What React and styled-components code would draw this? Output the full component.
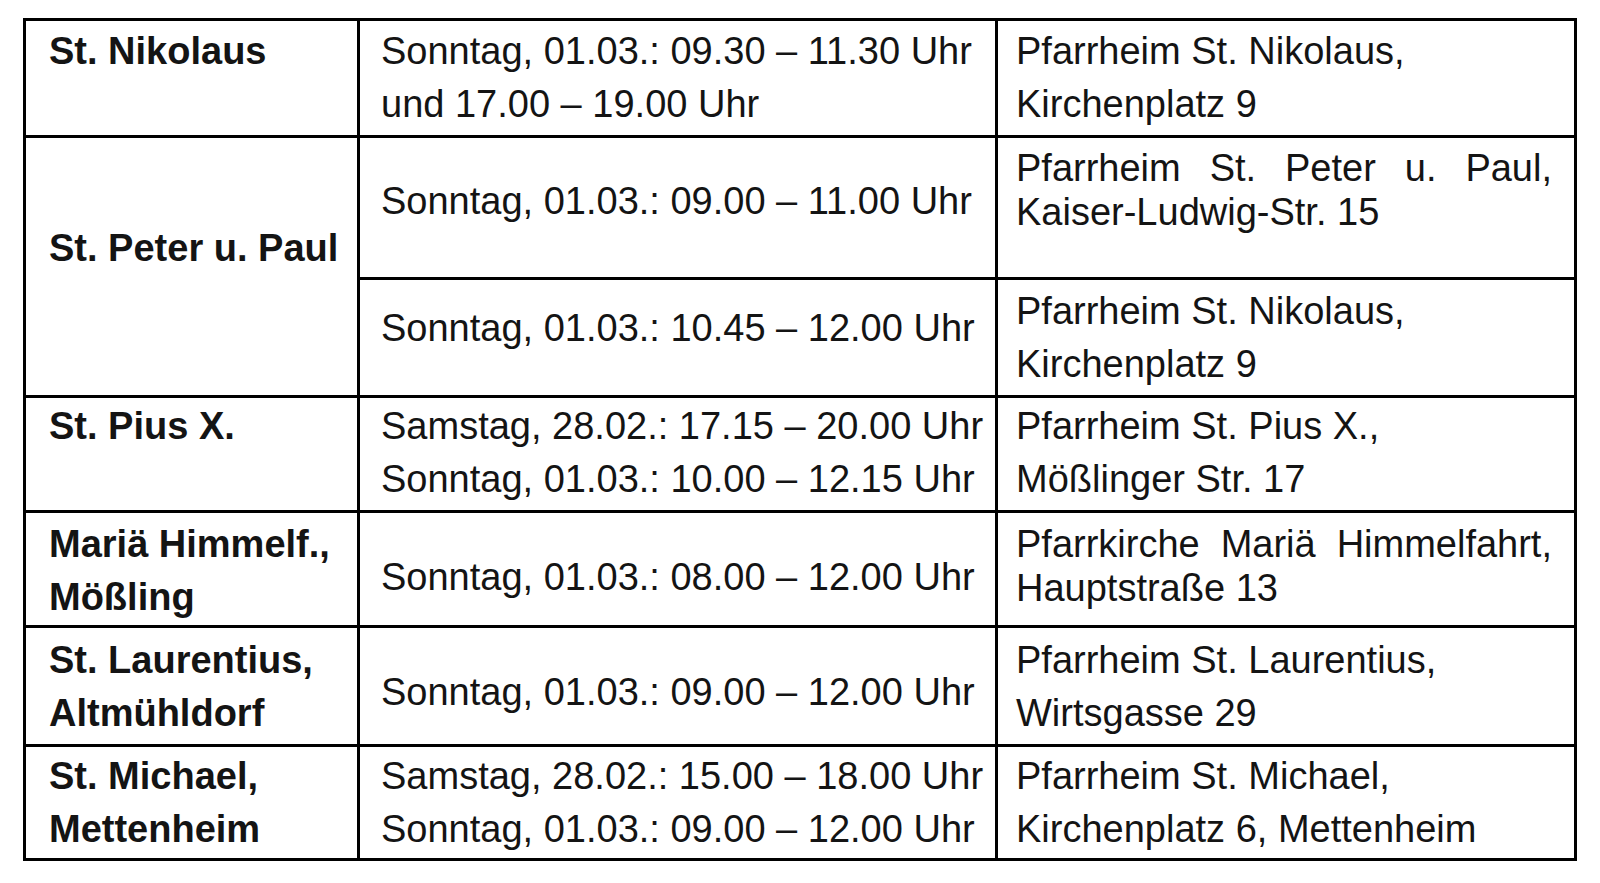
import React from "react";
import styled, { createGlobalStyle } from "styled-components";

const GlobalStyle = createGlobalStyle`
  html, body {
    margin: 0;
    padding: 0;
    background: #ffffff;
  }
  body {
    font-family: "Liberation Sans", Arial, sans-serif;
    color: #141414;
  }
`;

const Page = styled.div`
  padding: 18px 0 0 23px;
`;

const Grid = styled.div`
  display: grid;
  grid-template-columns: 334px 638px 579px;
  grid-template-rows: 117px 142px 118px 115px 115px 119px 114px;
  width: max-content;
  border-top: 3px solid #000;
  border-left: 3px solid #000;
`;

const Cell = styled.div`
  box-sizing: border-box;
  grid-row: ${(p) => (p.$span ? `span ${p.$span}` : "auto")};
  border-right: 3px solid #000;
  border-bottom: 3px solid #000;
  padding: ${(p) => p.$pt}px 22px 0 ${(p) => (p.$col === 3 ? 18 : p.$col === 1 ? 23 : 21)}px;
  font-size: 38px;
  font-weight: ${(p) => (p.$bold ? 700 : 400)};
  line-height: ${(p) => p.$lh || 53}px;
  overflow: hidden;
`;

const Line = styled.div`
  white-space: nowrap;
  text-align: ${(p) => (p.$justify ? "justify" : "left")};
  text-align-last: ${(p) => (p.$justify ? "justify" : "auto")};
`;

const cells = [
  { col: 1, bold: true, pt: 4, lines: ["St. Nikolaus"] },
  { col: 2, pt: 4, lines: ["Sonntag, 01.03.: 09.30 – 11.30 Uhr", "und 17.00 – 19.00 Uhr"] },
  { col: 3, pt: 4, lines: ["Pfarrheim St. Nikolaus,", "Kirchenplatz 9"] },

  { col: 1, bold: true, span: 2, pt: 84, lines: ["St. Peter u. Paul"] },
  { col: 2, pt: 37, lines: ["Sonntag, 01.03.: 09.00 – 11.00 Uhr"] },
  { col: 3, pt: 8, lh: 44, justify: true, lines: ["Pfarrheim St. Peter u. Paul,", "Kaiser-Ludwig-Str. 15"] },
  { col: 2, pt: 22, lines: ["Sonntag, 01.03.: 10.45 – 12.00 Uhr"] },
  { col: 3, pt: 5, lines: ["Pfarrheim St. Nikolaus,", "Kirchenplatz 9"] },

  { col: 1, bold: true, pt: 2, lines: ["St. Pius X."] },
  { col: 2, pt: 2, lines: ["Samstag, 28.02.: 17.15 – 20.00 Uhr", "Sonntag, 01.03.: 10.00 – 12.15 Uhr"] },
  { col: 3, pt: 2, lines: ["Pfarrheim St. Pius X.,", "Mößlinger Str. 17"] },

  { col: 1, bold: true, pt: 5, lines: ["Mariä Himmelf.,", "Mößling"] },
  { col: 2, pt: 38, lines: ["Sonntag, 01.03.: 08.00 – 12.00 Uhr"] },
  { col: 3, pt: 9, lh: 44, justify: true, lines: ["Pfarrkirche Mariä Himmelfahrt,", "Hauptstraße 13"] },

  { col: 1, bold: true, pt: 6, lines: ["St. Laurentius,", "Altmühldorf"] },
  { col: 2, pt: 38, lines: ["Sonntag, 01.03.: 09.00 – 12.00 Uhr"] },
  { col: 3, pt: 6, lines: ["Pfarrheim St. Laurentius,", "Wirtsgasse 29"] },

  { col: 1, bold: true, pt: 3, lines: ["St. Michael,", "Mettenheim"] },
  { col: 2, pt: 3, lines: ["Samstag, 28.02.: 15.00 – 18.00 Uhr", "Sonntag, 01.03.: 09.00 – 12.00 Uhr"] },
  { col: 3, pt: 3, lines: ["Pfarrheim St. Michael,", "Kirchenplatz 6, Mettenheim"] },
];

export default function App() {
  return (
    <>
      <GlobalStyle />
      <Page>
        <Grid>
          {cells.map((c, i) => (
            <Cell
              key={i}
              $col={c.col}
              $span={c.span}
              $pt={c.pt}
              $lh={c.lh}
              $bold={c.bold}
            >
              {c.lines.map((l, j) => (
                <Line key={j} $justify={c.justify && j < c.lines.length - 1}>
                  {l}
                </Line>
              ))}
            </Cell>
          ))}
        </Grid>
      </Page>
    </>
  );
}
